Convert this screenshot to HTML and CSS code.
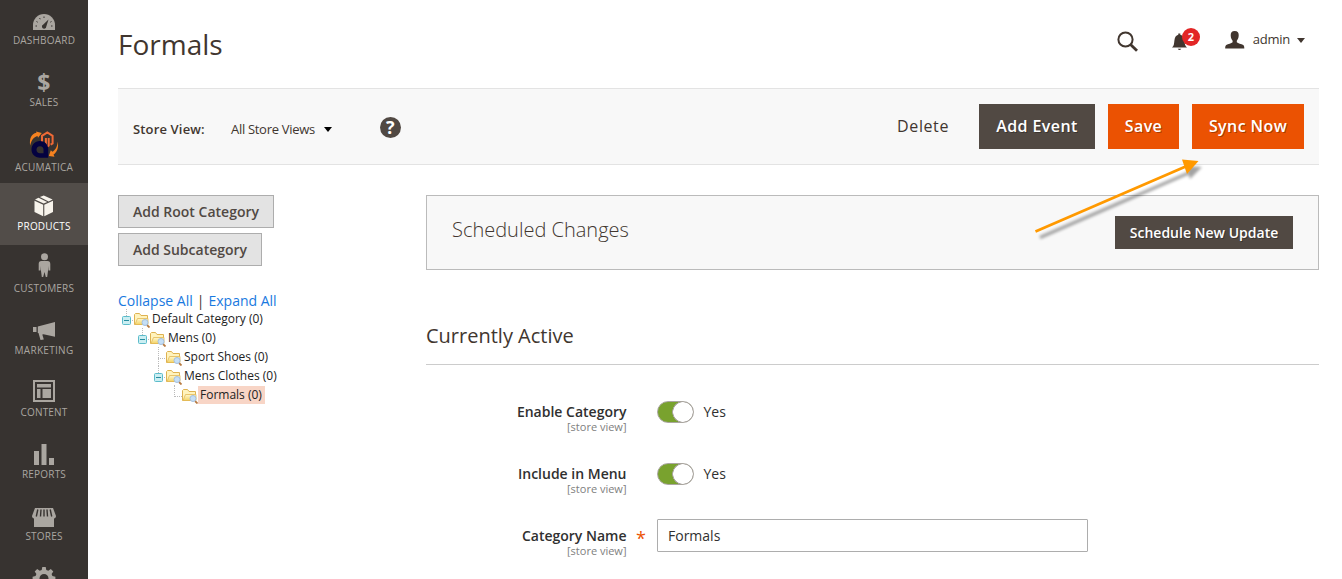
FILE: index.html
```html
<!DOCTYPE html>
<html lang="en">
<head>
<meta charset="utf-8">
<title>Formals</title>
<link rel="stylesheet" href="styles.css">
</head>
<body>
<svg class="defs" aria-hidden="true">
  <defs>
    <linearGradient id="gold" x1="0" y1="0" x2="0" y2="1"><stop offset="0" stop-color="#fff8cf"/><stop offset="1" stop-color="#f3d365"/></linearGradient>
    <filter id="soft" x="-20%" y="-20%" width="140%" height="140%"><feGaussianBlur stdDeviation="1.5"/></filter>
    <symbol id="folder" viewBox="0 0 16 16">
      <path d="M.5 12.500v-10l1-1h4l1.500 2h6.500v9z" fill="#fff3bd" stroke="#deb251"/>
      <path d="M1 12.500l2.500-6h10.500v6z" fill="url(#gold)" stroke="#e2b957" stroke-width=".8"/>
      <path d="M13 13l2.500 2.500" stroke="#b77a42" stroke-width="1.800"/>
      <circle cx="11" cy="10.500" r="3" fill="#c5dff6" stroke="#a5c0df"/>
    </symbol>
    <symbol id="minus" viewBox="0 0 12 19">
      <path d="M4.500 0v7M10 11.500h2" stroke="#bbb" stroke-dasharray="1 1"/>
      <rect x=".5" y="7.500" width="8" height="8" rx="1" fill="#cbeef2" stroke="#5cbccb"/>
      <path d="M2 11.500h5" stroke="#278da0"/>
    </symbol>
  </defs>
</svg>
<div class="page">
  <nav class="menu">
    <a class="menu-item"><svg class="menu-icon" viewBox="26 -3 36 34">
      <path d="M33 30v-5a11 11 0 0 1 22 0v5z"/>
      <g class="cut"><path d="M48.500 19.500l-2.200 7a2.200 2.200 0 1 1-3-2z"/><path class="ticks" d="M35.500 26h1.500M51 26h1.500M36.500 21.500l1.200.7M39.500 18l.8 1.200M44 16.500v1.500M51.500 21.500l-1.200.7"/></g>
    </svg><span>DASHBOARD</span></a>
    <a class="menu-item"><span class="dollar">$</span><span>SALES</span></a>
    <a class="menu-item acumatica"><svg class="menu-icon" viewBox="26 121 36 37">
      <path fill="#f58220" d="M30.200 145.500c-1-7 1-11.500 6.300-12.700l-.5-1.400 5.800 1.600-3.800 4.700-.5-1.700c-3.800 1-6 4-7.300 9.500zM57.800 141.500c1 6.500-1 11-4.300 13l1 2.200-5.700-.7 2-5.700 1.700 1.500c3-2 4.800-5 5.300-10.300z"/>
      <path fill="none" stroke="#ef6a36" stroke-width="2" d="M42 142.500v-6.700l5.300-3.300 5.300 3.300v7.700l-2 1.200M45.900 138v7.500l1.400 1 1.400-1V138"/>
      <path fill="#040240" d="M31.500 149.500c0-4.800 3.500-8.500 8.300-8.500 5 0 8.400 3.500 8.400 8v8.700h-8.400c-4.800 0-8.300-3.500-8.300-8.200z"/><path class="cut" d="M36.500 149.700a3.500 3.500 0 0 1 7 0v3.500H40c-2.200 0-3.500-1.500-3.500-3.500z"/>
    </svg><span>ACUMATICA</span></a>
    <a class="menu-item active"><svg class="menu-icon" viewBox="26 183 36 34">
      <path d="M34.500 200.700l8.700 4v11.500l-8.700-4.200zM44.300 204.700l8.700-4V212l-8.700 4.200zM35 199.400l3.500-1.700 8.700 4.200-3.500 1.700zM39.900 197l3.900-1.600 8.800 4-4 2z"/>
    </svg><span>PRODUCTS</span></a>
    <a class="menu-item"><svg class="menu-icon" viewBox="26 245 36 34">
      <circle cx="44.500" cy="256.800" r="3.500"/><path d="M41.500 261h6c2 0 2.800 1 2.800 3v6.500h-1.800V266l-.5 5-.8 6h-1.400l-1.300-5-1.300 5h-1.400l-.8-6-.5-5v4.500h-1.800V264c0-2 .8-3 2.800-3z"/>
    </svg><span>CUSTOMERS</span></a>
    <a class="menu-item marketing"><svg class="menu-icon" viewBox="26 307 36 34">
      <path d="M33 327h3.500v5H33zM37.800 326.500L55 322v14.800l-11.500-2.600-1.200.3 1.500 5-3.300.5-2-7h-.7z"/>
    </svg><span>MARKETING</span></a>
    <a class="menu-item"><svg class="menu-icon" viewBox="26 369 36 34">
      <path fill-rule="evenodd" d="M33 380h22v22H33zm2 2v18h18v-18z"/><path d="M37 384h14v3.500H37zM37 389h3.500v9H37zM42.500 389H51v9h-8.500z"/>
    </svg><span>CONTENT</span></a>
    <a class="menu-item"><svg class="menu-icon" viewBox="26 431 36 34">
      <path d="M34 451h5v14h-5zM41.500 444h5v21h-5zM49 458h5v7h-5z"/>
    </svg><span>REPORTS</span></a>
    <a class="menu-item"><svg class="menu-icon" viewBox="26 493 36 34">
      <path d="M35 508h18l3 8c0 1.500-1 2.500-2 2.500v9H34v-9c-1 0-2-1-2-2.500z"/><path class="cut-line" d="M37.800 509.500l-1.500 7M41 509.500l-.5 7M44 509.500v7M47 509.500l.5 7M50.200 509.500l1.500 7"/>
    </svg><span>STORES</span></a>
    <a class="menu-item"><svg class="menu-icon" viewBox="26 555 36 34">
      <path fill-rule="evenodd" d="M42.300 567h3.400l.6 3 2 .8 2.500-1.700 2.500 2.500-1.700 2.500.8 2 3 .6v3.400l-3 .6V589H35.600v-8.300l-3-.6v-3.400l3-.6.8-2-1.700-2.500 2.500-2.500 2.500 1.700 2-.8zM44 574a4.500 4.500 0 1 0 0 9 4.500 4.500 0 0 0 0-9z"/>
    </svg></a>
  </nav>

  <main class="main">
    <header class="header">
      <h1>Formals</h1>
      <div class="tools">
        <svg class="search" width="22" height="22" viewBox="0 0 22 22"><circle cx="8.500" cy="8.500" r="7.100" fill="none" stroke="#41362f" stroke-width="2"/><path d="M13.500 13.500l6.500 6.300" stroke="#41362f" stroke-width="2.800"/></svg>
        <div class="alerts">
          <svg width="16" height="18" viewBox="0 0 16 18"><path d="M0 14.500c2-1.500 2-3.500 2.400-7C2.800 4 4 2.400 6.300 1.800V.5h2v1.300C11 2.500 12 4 12.400 7.500c.4 3.500.6 5.500 2.600 7zM5.700 15.700h3.600q-1.800 2.600-3.600 0z" fill="#41362f"/></svg>
          <span class="badge">2</span>
        </div>
        <div class="account">
          <svg width="20" height="18" viewBox="0 0 20 18"><path d="M9.700 0c3 0 4.300 2 4 4.800-.2 2.500-1 3.700-1.900 4.900v1.500c1.200 1.300 4.500 1.500 6.500 2.800.9.700 1 2 1 3.500H.2c0-1.500.1-2.800 1-3.500 2-1.300 5.200-1.500 6.400-2.800V9.700C6.700 8.500 5.900 7.300 5.700 4.800 5.500 2 6.700 0 9.700 0z" fill="#41362f"/></svg>
          <span>admin</span><i class="caret"></i>
        </div>
      </div>
    </header>

    <section class="toolbar">
      <strong>Store View:</strong><span class="store">All Store Views</span><i class="caret black"></i><span class="help">?</span>
      <div class="actions"><a class="delete">Delete</a><button class="btn dark add">Add Event</button><button class="btn orange save">Save</button><button class="btn orange sync">Sync Now</button></div>
    </section>

    <div class="columns">
      <aside class="side">
        <button class="grey root">Add Root Category</button>
        <button class="grey sub">Add Subcategory</button>
        <div class="tree-links"><a>Collapse All</a><span>|</span><a>Expand All</a></div>
        <ul class="tree">
          <li class="l0"><svg class="minus"><use href="#minus"/></svg><svg class="folder"><use href="#folder"/></svg><span>Default Category (0)</span></li>
          <li class="l1"><svg class="minus"><use href="#minus"/></svg><svg class="folder"><use href="#folder"/></svg><span>Mens (0)</span></li>
          <li class="l2"><i class="elbow through"></i><svg class="folder"><use href="#folder"/></svg><span>Sport Shoes (0)</span></li>
          <li class="l2"><svg class="minus"><use href="#minus"/></svg><svg class="folder"><use href="#folder"/></svg><span>Mens Clothes (0)</span></li>
          <li class="l3"><i class="elbow"></i><svg class="folder"><use href="#folder"/></svg><span class="selected">Formals (0)</span></li>
        </ul>
      </aside>
      <div class="content">
        <section class="scheduled"><h2>Scheduled Changes</h2><button class="dark update">Schedule New Update</button></section>
        <h2 class="section-title">Currently Active</h2>
        <div class="field"><div class="label"><b>Enable Category</b><small>[store view]</small></div><span class="star"></span><span class="switch"></span><span class="yes">Yes</span></div>
        <div class="field"><div class="label"><b>Include in Menu</b><small>[store view]</small></div><span class="star"></span><span class="switch"></span><span class="yes">Yes</span></div>
        <div class="field"><div class="label"><b>Category Name</b><small>[store view]</small></div><span class="star">*</span><input value="Formals"></div>
      </div>
    </div>
  </main>
</div>
<svg class="arrow" width="190" height="100" viewBox="1025 150 190 100">
  <g transform="translate(4 6)" fill="#000" stroke="#000" opacity=".36" filter="url(#soft)"><path d="M1036 231.500L1188 165.500" stroke-width="3"/><path d="M1182 160l16 1-12 12z" stroke="none"/></g>
  <path d="M1035.500 231.500L1188 165.500" stroke="#f90" stroke-width="2.800"/><path d="M1182 159.500l16.500 1.500-11.500 13z" fill="#f90"/>
</svg>
</body>
</html>
```
FILE: styles.css
```css
* { box-sizing: border-box; }
body { margin: 0; height: 579px; overflow: hidden; background: #fff; color: #41362f; font: 14px/20px "Open Sans", "Noto Sans", sans-serif; }
h1, h2, ul { margin: 0; padding: 0; font-weight: 400; }
button, input { font: inherit; padding: 0; border: 0; border-radius: 0; }
.defs { position: absolute; width: 0; height: 0; }
.page { display: flex; height: 579px; overflow: hidden; }

.menu { flex: 0 0 88px; height: 582px; margin-top: -3px; background: #373330; overflow: hidden; }
.menu-item { display: flex; flex-direction: column; align-items: center; height: 62px; color: #aaa6a0; font-size: 10px; line-height: 18px; letter-spacing: .2px; }
.menu-icon { width: 36px; height: 34px; fill: #aaa6a0; display: block; flex: none; }
.menu .cut { fill: #373330; }
.ticks { stroke: #373330; fill: none; }
.cut-line { stroke: #373330; stroke-width: 1.4; }
.dollar { height: 34px; padding-top: 13px; font: bold 23px/20px "Open Sans", sans-serif; }
.acumatica .menu-icon { height: 37px; }
.marketing { letter-spacing: .3px; }
.active { background: #524d49; color: #fff; }
.active .menu-icon { fill: #f7f3eb; }

.main { width: 1231px; padding-left: 30px; }
.header { display: flex; justify-content: space-between; height: 88px; }
h1 { padding-top: 24px; font-size: 28px; line-height: 40px; }
.tools { display: flex; padding-right: 14px; }
.search { margin-top: 31px; margin-right: 33px; }
.alerts { position: relative; width: 28px; margin-right: 25px; padding-top: 33px; }
.alerts svg, .account svg { display: block; }
.badge { position: absolute; left: 10px; top: 28px; width: 18px; height: 18px; border-radius: 9px; background: #e22626; color: #fff; font-weight: 700; font-size: 11px; line-height: 18px; text-align: center; }
.account { display: flex; font-size: 13px; padding-top: 31px; height: 51px; line-height: 18px; }
.account span { margin: -1px 7px 0 8px; letter-spacing: -.25px; }
.caret { width: 0; height: 0; border: 4px solid transparent; border-top: 5px solid #41362f; border-bottom: 0; margin-top: 7px; }
.caret.black { border-top-color: #000; margin: 6px 0 0 9px; }

.toolbar { display: flex; align-items: center; height: 77px; padding: 0 15px; background: #f8f8f8; border: solid #e3e3e3; border-width: 1px 0; }
.toolbar strong { font-size: 13px; font-weight: 600; width: 98px; padding-top: 4px; letter-spacing: .15px; }
.store { font-size: 13px; padding-top: 4px; letter-spacing: -.3px; }
.help { width: 21px; height: 21px; margin: 2px 0 0 48px; border-radius: 50%; background: #514943; color: #fff; font-weight: 700; font-size: 18px; line-height: 21px; text-align: center; }
.actions { display: flex; align-items: center; margin-left: auto; font-size: 16px; letter-spacing: .6px; }
.delete { margin: -2px 30px 0 0; }
.btn { height: 45px; padding-bottom: 2px; font-size: 16px; font-weight: 600; letter-spacing: .4px; }
.dark, .orange { color: #fff; text-shadow: 1px 1px 0 rgba(0,0,0,.3); font-weight: 600; }
.dark { background: #514943; }
.orange { background: #eb5202; margin-left: 13px; }
.add { width: 116px; } .save { width: 71px; } .sync { width: 112px; }

.columns { display: flex; padding-top: 30px; }
.side { width: 308px; flex: none; }
.grey { display: block; height: 33px; margin-bottom: 5px; background: #e3e3e3; border: 1px solid #adadad; color: #514943; font-weight: 600; }
.root { width: 156px; } .sub { width: 144px; }
.tree-links { display: flex; gap: 4px; margin-top: 25px; height: 18px; white-space: nowrap; }
.tree-links a { color: #1979e0; }
.tree { list-style: none; font-size: 12px; color: #222; }
.tree li { display: flex; align-items: center; height: 19px; line-height: 18px; white-space: nowrap; }
.tree .l0 { padding-left: 4px; } .tree .l1 { padding-left: 20px; } .tree .l2 { padding-left: 36px; } .tree .l3 { padding-left: 52px; }
.minus { width: 12px; height: 19px; }
.folder { width: 16px; height: 16px; margin-top: 2px; }
.tree span { padding-left: 2px; padding-right: 3px; }
.selected { background: #f8d5c6; }
.elbow { align-self: flex-start; width: 8px; height: 12px; margin: 0 0 0 4px; border: dotted #bbb; border-width: 0 0 1px 1px; }
.elbow.through { height: 19px; border: 0; background: repeating-linear-gradient(#bbb 0 1px, transparent 1px 2px) left / 1px 100% no-repeat, repeating-linear-gradient(90deg, #bbb 0 1px, transparent 1px 2px) 0 11px / 100% 1px no-repeat; }

.content { flex: 1; }
.scheduled { display: flex; justify-content: space-between; height: 75px; padding: 20px 25px 0; border: 1px solid #bbb; background: #f8f8f8; }
.scheduled h2 { font-size: 20px; line-height: 28px; font-weight: 300; }
.update { width: 178px; height: 33px; }
.section-title { margin-top: 51px; height: 44px; border-bottom: 1px solid #ccc; font-size: 20px; line-height: 30px; margin-bottom: 30px; }
.field { display: flex; height: 62px; padding-top: 7px; }
.label { width: 201px; padding-right: .5px; text-align: right; color: #303030; }
.label b { display: block; font-weight: 600; }
.label small { display: block; font-size: 11px; line-height: 10px; color: #808080; }
.star { width: 30px; padding: 2px 0 0 9px; color: #eb5202; font-size: 18px; }
.switch { width: 37px; height: 22px; margin-top: -1px; border: 1px solid #aaa6a0; border-radius: 11px; background: radial-gradient(circle at 25px 10px, #fff 9.5px, #aaa6a0 10px, #aaa6a0 10.500px, #79a22e 11px); }
.yes { margin-left: 9.5px; color: #303030; }
input { width: 431px; height: 33px; margin-top: -7px; padding: 0 10px; border: 1px solid #adadad; border-radius: 1px; color: #303030; }
.arrow { position: absolute; left: 1025px; top: 150px; pointer-events: none; }
```
